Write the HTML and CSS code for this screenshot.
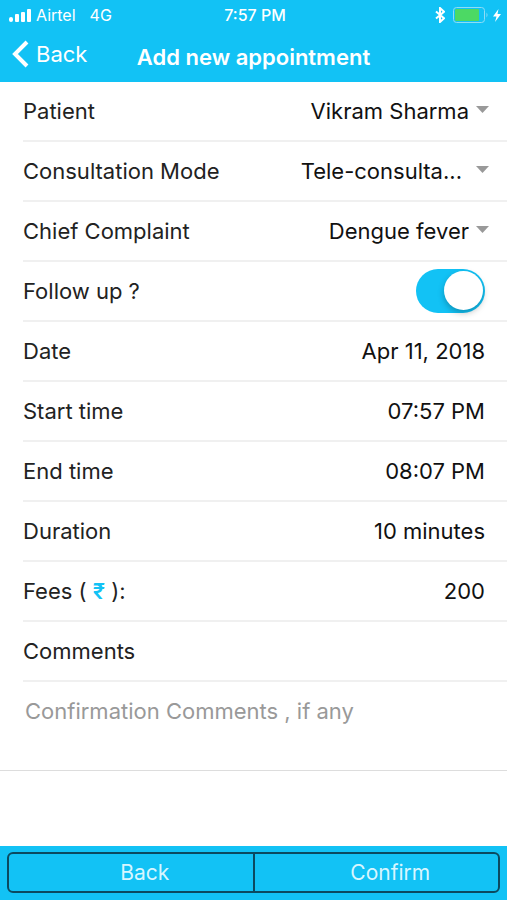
FILE: index.html
```html
<!DOCTYPE html>
<html lang="en">

<head>
  <meta charset="UTF-8" />
  <meta name="viewport" content="width=device-width, initial-scale=1.0" />
  <title>Add new appointment</title>
  <link rel="stylesheet" href="styles.css">
</head>

<body>
  <header class="header">
    <div class="status-bar">
      <div class="status-left">
        <svg class="signal" viewBox="0 0 23 13" aria-hidden="true">
          <rect x="0" y="8" width="4" height="5" rx="2" />
          <rect x="6" y="5" width="4" height="8" rx="1" />
          <rect x="12" y="3" width="4" height="10" rx="1" />
          <rect x="18" y="0" width="4" height="13" rx="1" />
        </svg>
        <span>Airtel</span>
        <span class="network">4G</span>
      </div>
      <span class="clock">7:57 PM</span>
      <div class="status-right">
        <svg class="bluetooth" viewBox="0 0 10 16" aria-hidden="true">
          <path d="M1 4.5 L9 11.3 L5 15 V1 L9 4.7 L1 11.5" />
        </svg>
        <svg class="battery" viewBox="0 0 36 16" aria-hidden="true">
          <rect class="battery-case" x="0.5" y="0.5" width="31" height="15" rx="3" />
          <rect class="battery-level" x="2" y="2" width="24" height="12" rx="1" />
          <path class="battery-tip" d="M33.5 5.5 Q35.5 8 33.5 10.5 Z" />
        </svg>
        <svg class="bolt" viewBox="0 0 8 13" aria-hidden="true">
          <path d="M5.5 0 L0 7.5 H3.5 L2 13 L8 5 H4.5 Z" />
        </svg>
      </div>
    </div>

    <nav class="nav-bar">
      <a href="#" class="nav-back">
        <svg class="chevron" viewBox="0 0 17 28" aria-hidden="true">
          <path d="M15 2 L3 14 L15 26" />
        </svg>
        <span>Back</span>
      </a>
      <h1>Add new appointment</h1>
    </nav>
  </header>

  <form class="form" id="appointmentForm">
    <div class="row">
      <label for="patient">Patient</label>
      <select id="patient">
        <option>Vikram Sharma</option>
      </select>
    </div>
    <div class="row">
      <label for="mode">Consultation Mode</label>
      <select id="mode" class="clipped">
        <option>Tele-consulta...</option>
      </select>
    </div>
    <div class="row">
      <label for="complaint">Chief Complaint</label>
      <select id="complaint">
        <option>Dengue fever</option>
      </select>
    </div>
    <div class="row">
      <label for="followUp">Follow up ?</label>
      <input type="checkbox" id="followUp" class="toggle" checked />
    </div>
    <div class="row">
      <label for="date">Date</label>
      <input type="text" id="date" value="Apr 11, 2018" />
    </div>
    <div class="row">
      <label for="startTime">Start time</label>
      <input type="text" id="startTime" value="07:57 PM" />
    </div>
    <div class="row">
      <label for="endTime">End time</label>
      <input type="text" id="endTime" value="08:07 PM" />
    </div>
    <div class="row">
      <label for="duration">Duration</label>
      <input type="text" id="duration" value="10 minutes" />
    </div>
    <div class="row">
      <label for="fees">Fees ( <span class="rupee">₹</span> ):</label>
      <input type="text" id="fees" value="200" />
    </div>
    <div class="row">
      <label for="comments">Comments</label>
    </div>
    <textarea id="comments" placeholder="Confirmation Comments , if any"></textarea>
  </form>

  <footer class="footer">
    <div class="buttons">
      <button type="button">Back</button>
      <button type="submit" form="appointmentForm">Confirm</button>
    </div>
  </footer>
</body>

</html>
```
FILE: styles.css
```css
* {
  box-sizing: border-box;
}

body {
  margin: 0;
  min-height: 100vh;
  display: flex;
  flex-direction: column;
  background: #fff;
  color: #222;
  font-family: Inter, "Liberation Sans", sans-serif;
  font-size: 22px;
}

.header {
  background: #12c2f5;
  color: #fff;
}

.status-bar {
  display: grid;
  grid-template-columns: 1fr auto 1fr;
  align-items: center;
  height: 30px;
  padding: 0 6px 0 9px;
  font-size: 16px;
}

.status-left,
.status-right {
  display: flex;
  align-items: center;
}

.status-left {
  gap: 4px;
}

.status-right {
  justify-content: flex-end;
  gap: 4px;
}

.network {
  margin-left: 10px;
}

.clock {
  font-weight: 500;
}

.signal {
  width: 23px;
  height: 13px;
  fill: #fff;
}

.bluetooth {
  width: 10px;
  height: 16px;
  margin-right: 4px;
  fill: none;
  stroke: #fff;
  stroke-width: 2;
}

.battery {
  width: 36px;
  height: 16px;
}

.battery-case {
  fill: none;
  stroke: #8fdcf5;
}

.battery-level {
  fill: #4cd964;
}

.battery-tip {
  fill: #8fdcf5;
}

.bolt {
  width: 8px;
  height: 13px;
  fill: #fff;
}

.nav-bar {
  position: relative;
  display: flex;
  align-items: center;
  justify-content: center;
  height: 52px;
  padding-top: 2px;
}

/* sits over the bar so the title stays centered */
.nav-back {
  position: absolute;
  left: 12px;
  top: 9px;
  display: flex;
  align-items: center;
  gap: 7px;
  color: #fff;
  line-height: 30px;
  text-decoration: none;
}

.chevron {
  width: 17px;
  height: 28px;
  fill: none;
  stroke: #fff;
  stroke-width: 4;
}

h1 {
  margin: 0;
  font-size: 22px;
  font-weight: 600;
}

.form {
  flex: 1;
}

.row {
  display: flex;
  align-items: center;
  justify-content: space-between;
  height: 60px;
  margin-left: 23px;
  padding-right: 22px;
  border-bottom: 2px solid #f0f0f0;
}

.rupee {
  color: #12c2f5;
  font-weight: 600;
}

select,
input[type="text"] {
  flex: 1;
  min-width: 0;
  margin: 0;
  padding: 0;
  border: none;
  outline: none;
  background: transparent;
  color: #111;
  font: inherit;
  text-align: right;
}

select {
  appearance: none;
  margin-right: -4px;
  padding-right: 20px;
  background: url("data:image/svg+xml,%3Csvg xmlns='http://www.w3.org/2000/svg' viewBox='0 0 13 7'%3E%3Cpath d='M0 0h13L6.5 7z' fill='%23999'/%3E%3C/svg%3E") no-repeat right 8px / 13px 7px;
  text-align-last: right;
}

select.clipped {
  padding-right: 27px;
}

.toggle {
  appearance: none;
  display: flex;
  width: 69px;
  height: 44px;
  margin: 0;
  padding: 2px;
  border-radius: 22px;
  background: #ccc;
}

.toggle::before {
  content: "";
  width: 39px;
  height: 39px;
  border-radius: 50%;
  background: #fff;
  box-shadow: 0 3px 6px rgba(0, 0, 0, 0.25);
}

.toggle:checked {
  justify-content: flex-end;
  background: #12c2f5;
}

textarea {
  display: block;
  width: 100%;
  height: 89px;
  padding: 16px 25px;
  border: none;
  border-bottom: 1px solid #ddd;
  outline: none;
  resize: none;
  font: inherit;
}

textarea::placeholder {
  color: #999;
}

.footer {
  padding: 6px 7px 7px;
  background: #12c2f5;
}

.buttons {
  display: flex;
  height: 41px;
  border: 2px solid #0b4a60;
  border-radius: 6px;
}

button {
  flex: 1;
  padding: 0 0 0 28px;
  border: none;
  background: transparent;
  color: #d8f6ff;
  font: inherit;
  font-size: 21px;
  cursor: pointer;
}

button + button {
  border-left: 2px solid #0b4a60;
}
```
